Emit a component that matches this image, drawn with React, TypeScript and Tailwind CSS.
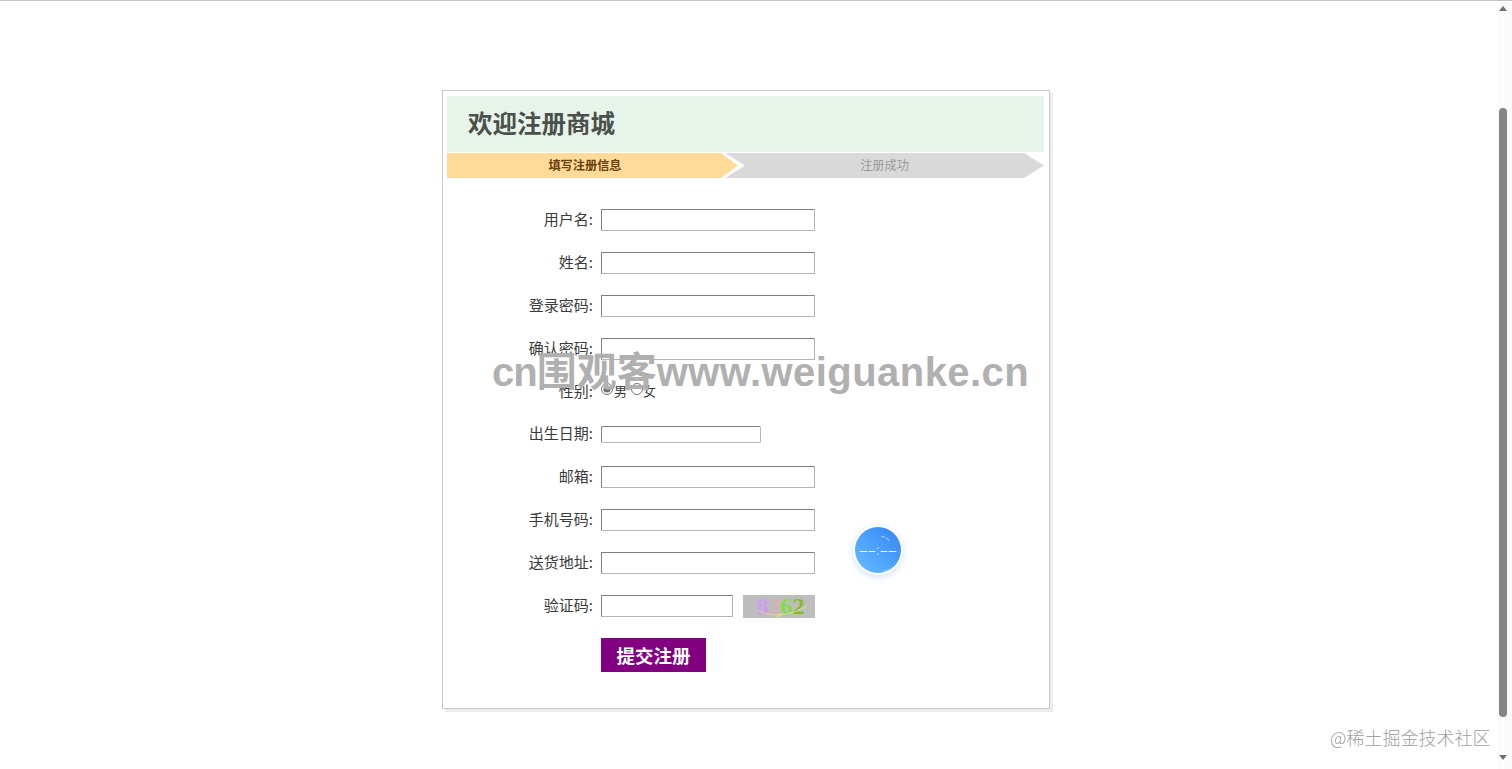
const fields = [
  { label: '用户名:' },
  { label: '姓名:' },
  { label: '登录密码:' },
  { label: '确认密码:' },
];

const moreFields = [{ label: '邮箱:' }, { label: '手机号码:' }, { label: '送货地址:' }];

const inputClass =
  'bg-white border border-[#b4b4b4] border-t-[#808080] border-l-[#808080] outline-none rounded-[1px]';

function Label({ text }: { text: string }) {
  return <span className="w-[146px] text-right text-[15px] leading-[22px] text-[#3a3a3a] -mt-[2px]">{text}</span>;
}

function Row({ label, children }: { label: string; children: React.ReactNode }) {
  return (
    <div className="flex items-center gap-2 h-[22px]">
      <Label text={label} />
      {children}
    </div>
  );
}

function Steps() {
  return (
    <div className="flex h-[25px] mt-px relative text-[12.2px] leading-[25px]">
      <div className="w-[291px] h-full bg-[#ffdb99] [clip-path:polygon(0_0,274px_0,291px_50%,274px_100%,0_100%)] text-center font-bold text-[#6b3f08] pr-[15px]">
        填写注册信息
      </div>
      <div className="w-[319px] -ml-[13px] h-full bg-[#d9d9d9] [clip-path:polygon(0_0,299px_0,319px_50%,299px_100%,0_100%,20px_50%)] text-center text-[#999]">
        注册成功
      </div>
    </div>
  );
}

function Captcha() {
  return (
    <div className="relative w-[72px] h-[23px] mt-[1px] ml-[2px] bg-[#bdbdbd] overflow-hidden flex items-center justify-center font-bold text-[24px] leading-none font-['Liberation_Serif',serif]">
      <span className="relative pl-[3px]">
        <span className="text-[#cf9cf0]">8</span>
        <span className="text-[#d9aeb4]">3</span>
        <span className="text-[#7ee03a]">6</span>
        <span className="text-[#86bd1c]">2</span>
      </span>
      <svg className="absolute inset-0" width="72" height="23" viewBox="0 0 72 23" fill="none">
        <path d="M14 15 C26 22 46 22 64 11" stroke="#e6e58a" strokeWidth="1" strokeOpacity="0.7" />
        <path d="M34 22 L38 19" stroke="#e8e860" strokeWidth="2" />
      </svg>
    </div>
  );
}

function Timer() {
  return (
    <div className="absolute left-[853px] top-[524px] w-[50px] h-[50px] rounded-full bg-white shadow-[0_2px_7px_rgba(140,180,220,0.4)] flex items-center justify-center">
      <div className="w-[46px] h-[46px] rounded-full bg-gradient-to-tr from-[#67bdff] to-[#3484f5]">
        <svg width="46" height="46" viewBox="0 0 46 46" fill="none" stroke="#e6f3ff" strokeLinecap="round">
          <path d="M5 24.5h7M14 24.5h6M26 24.5h6M34 24.5h7" strokeWidth="1" />
          <path d="M23 21v.5M23 27v.5" strokeWidth="1.2" />
          <path d="M27 9.5l2 .5M31 11l3 2" strokeWidth="0.8" />
          <path d="M28 44c4-.5 7-1.5 10-4" strokeWidth="0.7" stroke="#a6d6ff" />
        </svg>
      </div>
    </div>
  );
}

export default function App() {
  return (
    <div className="relative flex w-[1512px] h-[769px] overflow-hidden bg-white border-t border-[#c4c4c4] font-['Noto_Sans_CJK_SC','Liberation_Sans',sans-serif]">
      <main className="flex-1 pl-[442px] pt-[89px]">
        <div className="w-[608px] h-[619px] bg-white border border-[#c9c9c9] shadow-[3px_3px_0_#ececec] pt-[5px] pl-1 pr-[5px]">
          <div className="h-[56px] bg-[#e6f4ea] pl-[21px] text-[24.5px] leading-[54px] font-bold text-[#4b504b]">
            欢迎注册商城
          </div>
          <Steps />
          <form className="flex flex-col gap-[20.89px] pt-[31px]">
            {fields.map((f) => (
              <Row key={f.label} label={f.label}>
                <input type="text" className={`${inputClass} w-[214px] h-[22px]`} />
              </Row>
            ))}
            <Row label="性别:">
              <div className="flex items-center text-[13px] leading-[22px] text-[#3a3a3a] -mt-[2px]">
                <input type="radio" name="sex" defaultChecked className="w-[12px] h-[12px] m-0 mb-[4px] accent-[#707070]" />
                <span className="ml-px">男</span>
                <input type="radio" name="sex" className="w-[12px] h-[12px] ml-[4px] mb-[4px] accent-[#707070]" />
                <span>女</span>
              </div>
            </Row>
            <Row label="出生日期:">
              <input type="text" className={`${inputClass} w-[160px] h-[17px] rounded-[2px]`} />
            </Row>
            {moreFields.map((f) => (
              <Row key={f.label} label={f.label}>
                <input type="text" className={`${inputClass} w-[214px] h-[22px]`} />
              </Row>
            ))}
            <Row label="验证码:">
              <input type="text" className={`${inputClass} w-[132px] h-[22px]`} />
              <Captcha />
            </Row>
            <div className="pl-[154px]">
              <button type="button" className="w-[105px] h-[34px] bg-[#800080] text-white text-[18.5px] font-bold leading-[34px]">
                提交注册
              </button>
            </div>
          </form>
        </div>
      </main>

      <aside className="w-[15px] h-full bg-[#fbfbfb] flex flex-col items-center pr-[3px]">
        <div className="mt-[5px] w-0 h-0 border-x-[4px] border-x-transparent border-b-[5px] border-b-[#707070]" />
        <div className="mt-[97px] w-[8px] h-[609px] rounded-[4px] bg-[#848484]" />
        <div className="mt-[38px] w-0 h-0 border-x-[4px] border-x-transparent border-t-[5px] border-t-[#707070]" />
      </aside>

      <div className="absolute left-[492px] top-[343px] text-[40px] leading-[56px] font-bold text-[#b0b0b0] whitespace-nowrap font-['Liberation_Sans','Noto_Sans_CJK_SC',sans-serif]">
        <span className="tracking-[-1px]">cn</span>围观客<span className="tracking-[0.45px]">www.weiguanke.cn</span>
      </div>
      <Timer />
      <div className="absolute left-[1330px] top-[723px] text-[18px] leading-[26px] font-light text-[#a0a0a0] whitespace-nowrap">
        @稀土掘金技术社区
      </div>
    </div>
  );
}
